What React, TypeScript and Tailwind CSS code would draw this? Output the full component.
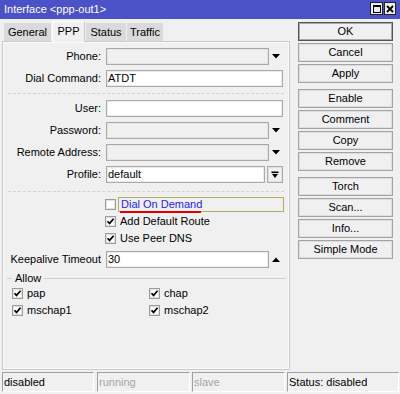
import React from "react";

const font = "font-['Liberation_Sans',Arial,sans-serif]";

function Check({ checked }: { checked: boolean }) {
  return (
    <div className="w-[11px] h-[11px] shrink-0 bg-white border border-[#9c9c9c] shadow-[inset_0_0_0_1px_#e2e2e2] flex items-center justify-center">
      {checked && (
        <svg width="9" height="9" viewBox="0 0 9 9">
          <path d="M1.5 4.2 L3.5 6.4 L7.6 1.8" stroke="#000" strokeWidth="1.7" fill="none" />
        </svg>
      )}
    </div>
  );
}

function Down() {
  return (
    <svg width="8" height="5" viewBox="0 0 8 5">
      <polygon points="0,0 8,0 4,4.5" fill="#000" />
    </svg>
  );
}
function Up() {
  return (
    <svg width="8" height="5" viewBox="0 0 8 5">
      <polygon points="0,5 8,5 4,0.5" fill="#000" />
    </svg>
  );
}

function Label({ children }: { children: React.ReactNode }) {
  return <div className="w-[98px] shrink-0 text-right whitespace-nowrap">{children}</div>;
}

function Field({ value = "", disabled = false, w }: { value?: string; disabled?: boolean; w: string }) {
  return (
    <div
      className={`${w} h-[17px] shrink-0 border border-[#a9a9a9] flex items-center pl-[1px] leading-[13px] ${
        disabled ? "bg-[#f0f0f0] shadow-[inset_0_0_0_1px_#e4e4e4]" : "bg-white shadow-[inset_0_0_0_1px_#ececec]"
      }`}
    >
      {value}
    </div>
  );
}

function Row({ children }: { children: React.ReactNode }) {
  return <div className="flex items-center h-[17px]">{children}</div>;
}

function Btn({ label, def = false }: { label: string; def?: boolean }) {
  return (
    <div
      className={`h-[19px] w-[95px] flex items-center justify-center bg-[#f0f0f0] ${
        def
          ? "border border-[#555555] shadow-[inset_0_0_0_1px_#a8a8a8]"
          : "border border-[#a3a3a3] shadow-[inset_0_0_0_1px_#dedede]"
      }`}
    >
      {label}
    </div>
  );
}

export default function App() {
  return (
    <div className={`w-[400px] h-[394px] bg-[#f0f0f0] flex flex-col ${font} text-[11px] leading-[13px] text-black overflow-hidden`}>
      {/* Title bar */}
      <div className="h-[19px] shrink-0 bg-[#4b52c8] flex items-center pl-[4px] pr-[4px] text-white text-[11px]">
        <div className="flex-1">Interface &lt;ppp-out1&gt;</div>
        <div className="flex gap-[1px] mt-[-2px]">
          <div className="w-[13px] h-[13px] bg-[#ececec] border border-[#222] flex items-center justify-center">
            <div className="w-[8px] h-[8px] border border-black border-t-2" />
          </div>
          <div className="w-[12px] h-[13px] bg-[#ececec] border border-[#222] flex items-center justify-center">
            <svg width="8" height="8" viewBox="0 0 8 8">
              <path d="M1 1 L7 7 M7 1 L1 7" stroke="#000" strokeWidth="1.8" />
            </svg>
          </div>
        </div>
      </div>

      {/* Body */}
      <div className="flex flex-1 min-h-0">
        <div className="w-[288px] ml-[2px] flex flex-col mb-[2px]">
          {/* Tabs */}
          <div className="h-[22px] flex items-end pl-[2px] gap-[1px]">
            <div className="h-[18px] w-[47px] bg-[#dadada] flex items-center justify-center">General</div>
            <div className="h-[21px] w-[33px] mb-[-1px] relative z-10 bg-[#f0f0f0] border-t border-l border-white border-r border-r-[#c8c8c8] flex items-center justify-center pb-[1px]">
              PPP
            </div>
            <div className="h-[18px] w-[40px] bg-[#dadada] flex items-center justify-center">Status</div>
            <div className="h-[18px] w-[36px] bg-[#dadada] flex items-center justify-center">Traffic</div>
          </div>

          {/* Panel */}
          <div className="flex-1 border border-[#cbcbcb] shadow-[inset_0_0_0_1px_#fafafa] flex flex-col pt-[6px]">
            <div className="flex flex-col gap-[5px]">
              <Row>
                <Label>Phone:</Label>
                <div className="ml-[5px] w-[177px] flex items-center">
                  <Field disabled w="w-[163px]" />
                  <div className="flex-1 flex justify-center">
                    <Down />
                  </div>
                </div>
              </Row>
              <Row>
                <Label>Dial Command:</Label>
                <div className="ml-[5px]">
                  <Field value="ATDT" w="w-[177px]" />
                </div>
              </Row>
            </div>

            <div className="mx-[5px] mt-[6px] mb-[6px] border-t border-dashed border-[#d2d2d2]" />

            <div className="flex flex-col gap-[5px]">
              <Row>
                <Label>User:</Label>
                <div className="ml-[5px]">
                  <Field w="w-[177px]" />
                </div>
              </Row>
              <Row>
                <Label>Password:</Label>
                <div className="ml-[5px] w-[177px] flex items-center">
                  <Field disabled w="w-[163px]" />
                  <div className="flex-1 flex justify-center">
                    <Down />
                  </div>
                </div>
              </Row>
              <Row>
                <Label>Remote Address:</Label>
                <div className="ml-[5px] w-[177px] flex items-center">
                  <Field disabled w="w-[163px]" />
                  <div className="flex-1 flex justify-center">
                    <Down />
                  </div>
                </div>
              </Row>
              <Row>
                <Label>Profile:</Label>
                <div className="ml-[5px] w-[177px] flex items-center gap-[2px]">
                  <Field value="default" w="w-[159px]" />
                  <div className="w-[17px] h-[17px] border border-[#a9a9a9] shadow-[inset_0_0_0_1px_#e2e2e2] flex items-center justify-center">
                    <svg width="8" height="8" viewBox="0 0 8 8">
                      <rect x="0.5" y="0.5" width="7" height="1.6" fill="#000" />
                      <polygon points="1,3 7,3 4,7" fill="#000" />
                    </svg>
                  </div>
                </div>
              </Row>
            </div>

            <div className="mx-[5px] mt-[8px] mb-[4px] border-t border-dashed border-[#d2d2d2]" />

            <div className="flex flex-col pl-[102px]">
              <div className="h-[17px] flex items-center">
                <Check checked={false} />
                <div className="ml-[2px] w-[166px] h-[15px] border border-[#b3ad64] flex items-center pl-[2px] text-[#2424f0] relative">
                  Dial On Demand
                  <div className="absolute left-[1px] top-[13px] w-[81px] h-[2px] bg-[#e00000]" />
                </div>
              </div>
              <div className="h-[17px] flex items-center">
                <Check checked />
                <div className="ml-[4px]">Add Default Route</div>
              </div>
              <div className="h-[17px] flex items-center">
                <Check checked />
                <div className="ml-[4px]">Use Peer DNS</div>
              </div>
            </div>

            <div className="mt-[4px]">
              <Row>
                <Label>Keepalive Timeout</Label>
                <div className="ml-[5px] w-[177px] flex items-center">
                  <Field value="30" w="w-[163px]" />
                  <div className="flex-1 flex justify-center">
                    <Up />
                  </div>
                </div>
              </Row>
            </div>

            <div className="mt-[3px] h-[14px] flex items-center pl-[4px] pr-[3px]">
              <div className="w-[5px] border-t border-[#cfcfcf]" />
              <div className="px-[3px]">Allow</div>
              <div className="flex-1 border-t border-[#cfcfcf]" />
            </div>

            <div className="grid grid-cols-[137px_1fr] pl-[9px]">
              <div className="h-[17px] flex items-center">
                <Check checked />
                <div className="ml-[4px]">pap</div>
              </div>
              <div className="h-[17px] flex items-center">
                <Check checked />
                <div className="ml-[4px]">chap</div>
              </div>
              <div className="h-[17px] flex items-center">
                <Check checked />
                <div className="ml-[4px]">mschap1</div>
              </div>
              <div className="h-[17px] flex items-center">
                <Check checked />
                <div className="ml-[4px]">mschap2</div>
              </div>
            </div>
          </div>
        </div>

        {/* Buttons */}
        <div className="ml-[8px] pt-[3px] flex flex-col">
          <div className="flex flex-col gap-[2px]">
            <Btn label="OK" def />
            <Btn label="Cancel" />
            <Btn label="Apply" />
          </div>
          <div className="flex flex-col gap-[2px] mt-[6px]">
            <Btn label="Enable" />
            <Btn label="Comment" />
            <Btn label="Copy" />
            <Btn label="Remove" />
          </div>
          <div className="flex flex-col gap-[2px] mt-[6px]">
            <Btn label="Torch" />
            <Btn label="Scan..." />
            <Btn label="Info..." />
            <Btn label="Simple Mode" />
          </div>
        </div>
      </div>

      {/* Status bar */}
      <div className="h-[20px] shrink-0 flex pl-[2px] mb-[2px]">
        <div className="w-[92px] border-t border-l border-[#a0a0a0] border-b border-r border-b-white border-r-white flex items-center pl-[1px]">
          disabled
        </div>
        <div className="w-[93px] ml-[3px] border-t border-l border-[#a0a0a0] border-b border-r border-b-white border-r-white flex items-center pl-[1px] text-[#a6a6a6]">
          running
        </div>
        <div className="w-[93px] ml-[2px] border-t border-l border-[#a0a0a0] border-b border-r border-b-white border-r-white flex items-center pl-[1px] text-[#a6a6a6]">
          slave
        </div>
        <div className="w-[112px] ml-[2px] border-t border-l border-[#a0a0a0] border-b border-r border-b-white border-r-white flex items-center pl-[1px]">
          Status: disabled
        </div>
      </div>
    </div>
  );
}
